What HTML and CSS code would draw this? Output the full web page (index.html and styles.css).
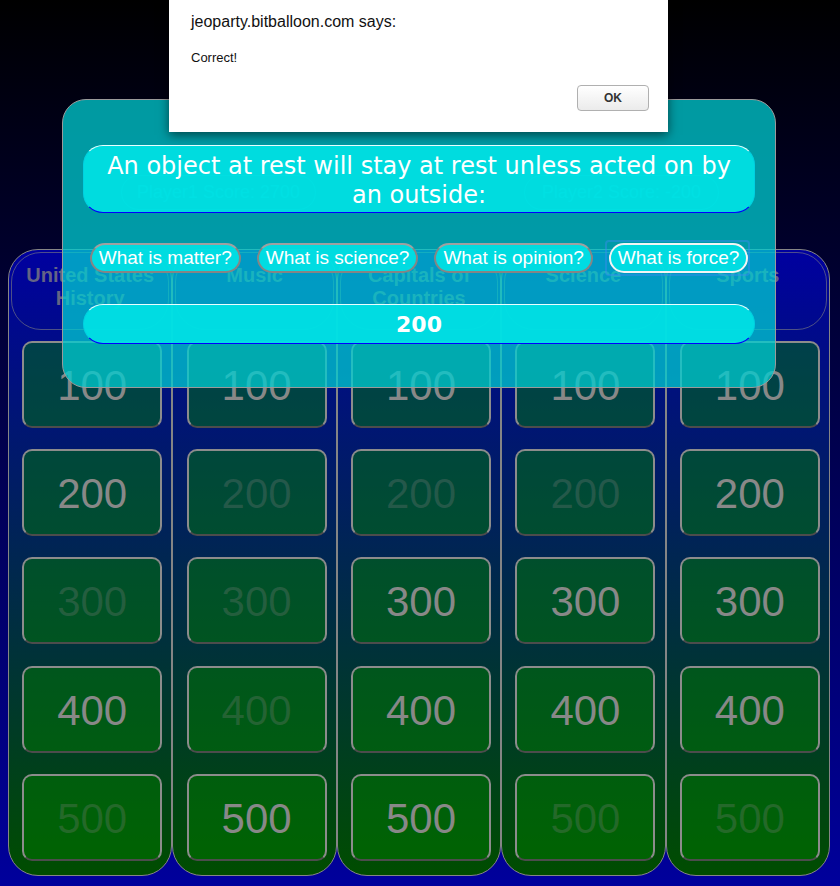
FILE: index.html
```html
<!DOCTYPE html>
<html>
<head>
<meta charset="utf-8">
<title>Jeoparty</title>
<link rel="stylesheet" href="styles.css">
</head>
<body>
<header class="top">
  <div class="scores">
    <div class="score">Player1 Score: 2700</div>
    <div class="score">Player2 Score: -200</div>
  </div>
</header>
<main class="board">
  <section class="col">
    <div class="cat">United States History</div>
    <div class="tile">100</div>
    <div class="tile">200</div>
    <div class="tile done">300</div>
    <div class="tile">400</div>
    <div class="tile done">500</div>
  </section>
  <section class="col">
    <div class="cat">Music</div>
    <div class="tile">100</div>
    <div class="tile done">200</div>
    <div class="tile done">300</div>
    <div class="tile done">400</div>
    <div class="tile">500</div>
  </section>
  <section class="col">
    <div class="cat">Capitals of Countries</div>
    <div class="tile">100</div>
    <div class="tile done">200</div>
    <div class="tile">300</div>
    <div class="tile">400</div>
    <div class="tile">500</div>
  </section>
  <section class="col">
    <div class="cat">Science</div>
    <div class="tile">100</div>
    <div class="tile done">200</div>
    <div class="tile">300</div>
    <div class="tile">400</div>
    <div class="tile done">500</div>
  </section>
  <section class="col">
    <div class="cat">Sports</div>
    <div class="tile">100</div>
    <div class="tile">200</div>
    <div class="tile">300</div>
    <div class="tile">400</div>
    <div class="tile done">500</div>
  </section>
</main>
<div class="modal">
  <div class="question">An object at rest will stay at rest unless acted on by an outside:</div>
  <div class="answers">
    <button class="answer">What is matter?</button>
    <button class="answer">What is science?</button>
    <button class="answer">What is opinion?</button>
    <button class="answer focus">What is force?</button>
  </div>
  <div class="value">200</div>
</div>
<div class="alert">
  <div class="alert-title">jeoparty.bitballoon.com says:</div>
  <div class="alert-msg">Correct!</div>
  <div class="alert-actions"><button class="ok">OK</button></div>
</div>
</body>
</html>
```
FILE: styles.css
```css
html {
  height: 100%;
  background: linear-gradient(#000000, #00009c);
}
body {
  margin: 8px;
  font-family: "Liberation Sans", Arial, sans-serif;
}
.top {
  padding-top: 167px;
}
.scores {
  display: flex;
  justify-content: center;
  gap: 208px;
}
.score {
  width: 195px;
  height: 35px;
  box-sizing: border-box;
  border: 1px solid rgba(0, 255, 255, 0.45);
  border-radius: 18px;
  color: rgba(0, 255, 255, 0.6);
  font-size: 18px;
  display: flex;
  align-items: center;
  justify-content: center;
}
.board {
  display: flex;
  width: 822px;
  margin-top: 39px;
}
.col {
  flex: 1;
  box-sizing: border-box;
  height: 627px;
  border: 1px solid #858585;
  border-radius: 30px;
  background: linear-gradient(#0000a0, #004d00);
  padding: 2px 0 14px 4px;
  display: flex;
  flex-direction: column;
  align-items: center;
}
.cat {
  align-self: stretch;
  height: 79px;
  box-sizing: border-box;
  border: 1px solid rgba(128, 128, 128, 0.6);
  border-radius: 30px;
  padding-top: 11px;
  margin: 0 2px 11px -2px;
  text-align: center;
  font-weight: bold;
  font-size: 20px;
  line-height: 23px;
  color: rgba(128, 128, 128, 0.78);
}
.tile {
  width: 140px;
  height: 87px;
  flex: none;
  box-sizing: border-box;
  border: 2px solid #8c8c8c;
  border-bottom-color: #4c4c4c;
  border-radius: 10px;
  background: rgba(0, 128, 0, 0.45);
  color: #888888;
  font-size: 42px;
  padding-top: 3px;
  display: flex;
  align-items: center;
  justify-content: center;
  margin-bottom: 21.3px;
}
.tile:last-child {
  margin-bottom: 0;
}
.tile.done {
  color: rgba(128, 128, 128, 0.28);
}
.modal {
  position: absolute;
  left: 62px;
  top: 99px;
  width: 714px;
  height: 289px;
  box-sizing: border-box;
  border: 1px solid #9a9a9a;
  border-radius: 24px;
  background: rgba(0, 206, 209, 0.75);
  padding: 45px 20px 0;
}
.question {
  height: 68px;
  box-sizing: border-box;
  border-radius: 20px;
  background: rgba(0, 227, 229, 0.9);
  border: 1px solid;
  border-color: #e8ffff #00d0e0 #0000ff;
  color: #ffffff;
  font-family: "DejaVu Sans", Verdana, sans-serif;
  font-size: 24px;
  line-height: 29px;
  text-align: center;
  padding: 6px 18px 0;
}
.answers {
  display: flex;
  justify-content: center;
  gap: 16px;
  margin-top: 30px;
}
.answer {
  height: 30px;
  box-sizing: border-box;
  border: 2px solid #858585;
  border-top-color: #a0a0a0;
  border-radius: 15px;
  background: rgba(0, 227, 229, 0.9);
  color: #ffffff;
  font-family: "Liberation Sans", Arial, sans-serif;
  font-size: 19px;
  line-height: 24px;
  padding: 0 7px;
}
.answer.focus {
  position: relative;
  border-color: #f4f4f4;
}
.answer.focus::after {
  content: "";
  position: absolute;
  top: -5px;
  bottom: -5px;
  left: -6px;
  right: -4px;
  border: 2px solid rgba(60, 140, 240, 0.45);
  border-radius: 4px;
}
.value {
  margin-top: 31px;
  height: 40px;
  box-sizing: border-box;
  border-radius: 20px;
  background: rgba(0, 227, 229, 0.9);
  border: 1px solid;
  border-color: #e8ffff #00d0e0 #0000ff;
  color: #ffffff;
  font-family: "DejaVu Sans", Verdana, sans-serif;
  font-weight: bold;
  font-size: 22px;
  line-height: 40px;
  text-align: center;
}
.alert {
  position: absolute;
  left: 169px;
  top: 0;
  width: 499px;
  height: 132px;
  box-sizing: border-box;
  background: #ffffff;
  box-shadow: 0 3px 10px rgba(0, 0, 0, 0.55);
  padding: 12px 19px 0 22px;
  font-family: "Liberation Sans", Arial, sans-serif;
  color: #111111;
}
.alert-title {
  font-size: 16px;
  line-height: 20px;
}
.alert-msg {
  font-size: 13px;
  line-height: 16px;
  margin-top: 18px;
}
.alert-actions {
  display: flex;
  justify-content: flex-end;
  margin-top: 19px;
}
.ok {
  width: 72px;
  height: 26px;
  border: 1px solid #b0b0b0;
  border-radius: 4px;
  background: linear-gradient(#ffffff, #ebebeb);
  font-family: "Liberation Sans", Arial, sans-serif;
  font-weight: bold;
  font-size: 12px;
  color: #333333;
}
```
